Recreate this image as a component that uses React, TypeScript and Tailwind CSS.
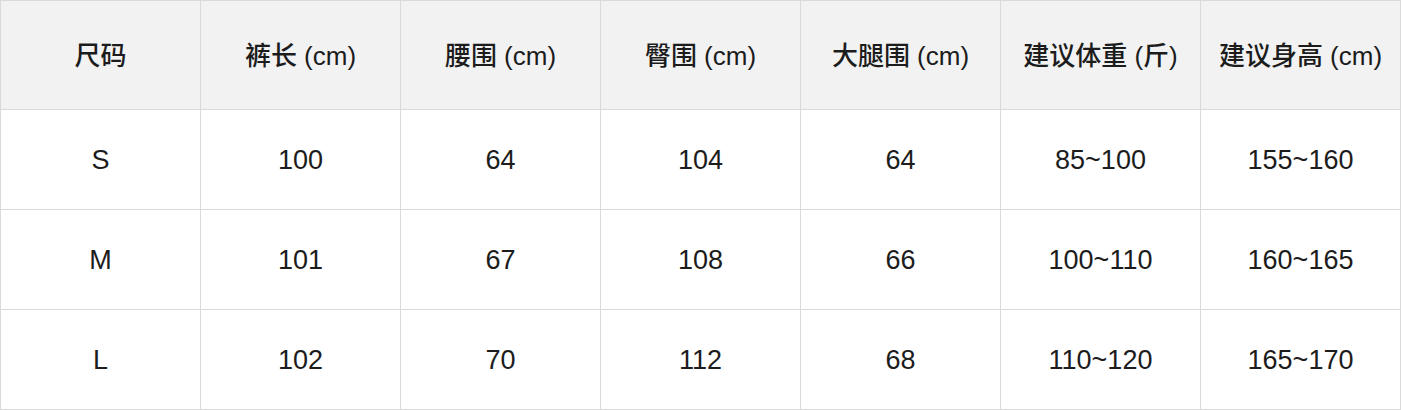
const headers = ['尺码', '裤长 (cm)', '腰围 (cm)', '臀围 (cm)', '大腿围 (cm)', '建议体重 (斤)', '建议身高 (cm)']

const rows = [
  ['S', '100', '64', '104', '64', '85~100', '155~160'],
  ['M', '101', '67', '108', '66', '100~110', '160~165'],
  ['L', '102', '70', '112', '68', '110~120', '165~170'],
]

export default function App() {
  return (
    <div
      className="w-[1401px] h-[410px] bg-white text-[#1c1c1c]"
      style={{ fontFamily: '"Liberation Sans", "Noto Sans CJK SC", sans-serif' }}
    >
      <div className="grid grid-cols-[repeat(7,200px)] border-l border-t border-[#dadada]">
        {headers.map(h => (
          <div
            key={h}
            className="h-[109px] pt-[3px] flex items-center justify-center bg-[#f2f2f2] border-r border-b border-[#dadada] text-[26px] font-medium"
          >
            {h}
          </div>
        ))}
        {rows.map(r =>
          r.map((c, i) => (
            <div
              key={r[0] + i}
              className="h-[100px] pt-[2px] flex items-center justify-center border-r border-b border-[#dadada] text-[27px]"
            >
              {c}
            </div>
          ))
        )}
      </div>
    </div>
  )
}
